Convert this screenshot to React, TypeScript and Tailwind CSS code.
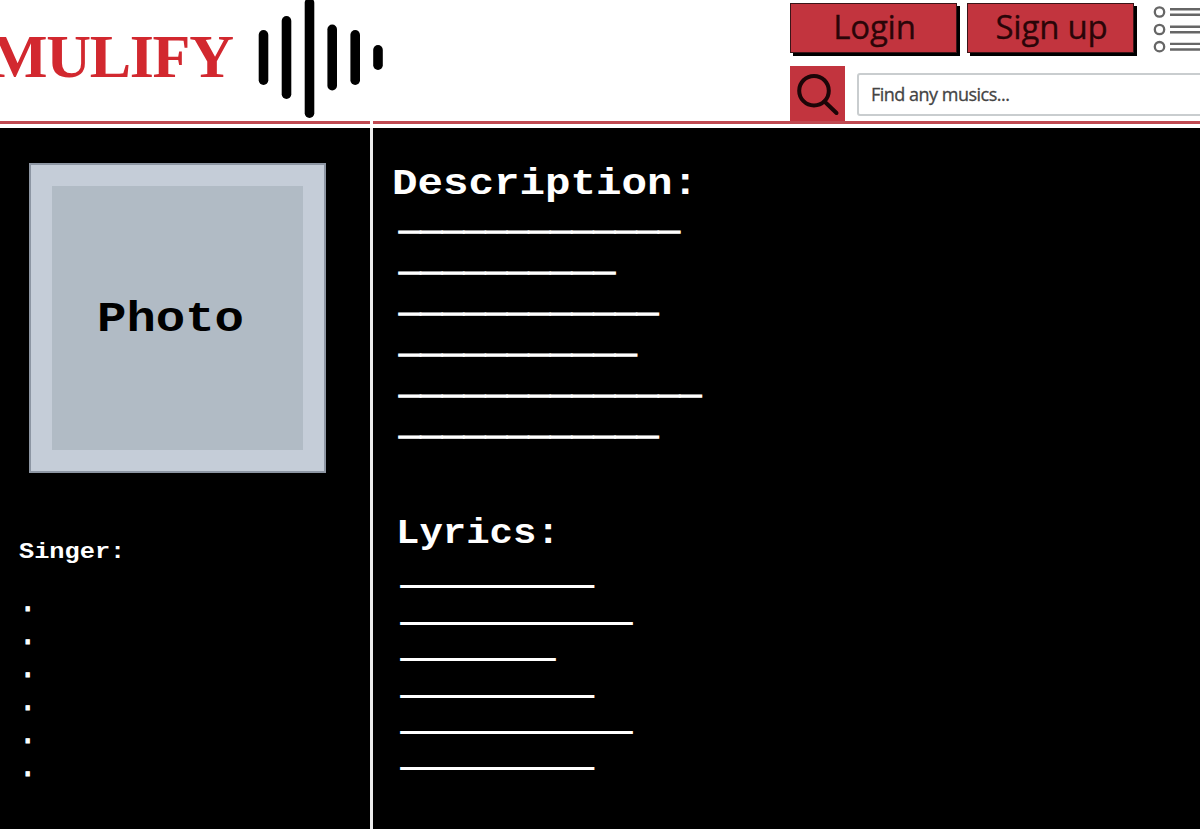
const description = [13, 10, 12, 11, 14, 12];
const lyrics = [10, 12, 8, 10, 12, 10];
const singers = [0, 1, 2, 3, 4, 5];
const waves = [
  { x: 263.5, top: 30, bottom: 85 },
  { x: 286.5, top: 16, bottom: 99 },
  { x: 309.5, top: -2, bottom: 118 },
  { x: 332.2, top: 24.5, bottom: 90.5 },
  { x: 355.2, top: 30, bottom: 85 },
  { x: 378, top: 45, bottom: 70 },
];

function Logo() {
  return (
    <div className="flex h-[121px] w-[400px] items-start overflow-hidden">
      <div className="-ml-[11px] mt-[21px] w-[260px] shrink-0 whitespace-nowrap font-['Liberation_Serif',serif] text-[62px] leading-[70px] font-bold tracking-[-1.3px] text-[#d2282f]">
        MULIFY
      </div>
      <svg className="h-[121px] w-[140px] shrink-0" viewBox="249 0 140 121">
        {waves.map((w) => (
          <rect key={w.x} x={w.x - 4.8} y={w.top} width={9.6} height={w.bottom - w.top} rx={4.8} />
        ))}
      </svg>
    </div>
  );
}

function Button({ label }: { label: string }) {
  return (
    <button className="flex h-[50px] w-[167px] items-center justify-center border border-[#3a1518] bg-[#c2343e] pb-[3px] pl-[2px] font-['Open_Sans',sans-serif] text-[33px] leading-none tracking-[-0.2px] text-[#2a0508] shadow-[3px_3px_0_#000] [-webkit-text-stroke:0.3px_#2a0508]">
      {label}
    </button>
  );
}

function Menu() {
  return (
    <svg className="h-[55px] w-[50px] shrink-0" viewBox="1150 0 50 55" fill="none" stroke="#666">
      {[12, 29.5, 46.7].map((y) => (
        <g key={y}>
          <circle cx={1159.5} cy={y} r={4.7} strokeWidth={2.3} />
          <path d={`M1170 ${y - 2.8}h30M1170 ${y + 2.8}h30`} strokeWidth={2.4} />
        </g>
      ))}
    </svg>
  );
}

function Lines({ counts }: { counts: number[] }) {
  return (
    <>
      {counts.map((n, i) => (
        <p key={i}>{"_".repeat(n)}</p>
      ))}
    </>
  );
}

export default function App() {
  return (
    <div className="flex h-[829px] w-[1200px] flex-col overflow-hidden bg-black font-['Liberation_Mono',monospace] font-bold text-white">
      <header className="flex h-[121px] shrink-0 justify-between bg-white">
        <Logo />
        <div className="flex w-[410px] flex-col font-normal">
          <div className="flex h-[66px] pt-[3px]">
            <Button label="Login" />
            <div className="w-[10px] shrink-0" />
            <Button label="Sign up" />
            <div className="-mt-[3px] ml-4">
              <Menu />
            </div>
          </div>
          <div className="flex h-[55px] shrink-0">
            <div className="h-[55px] w-[55px] shrink-0 bg-[#c2343e]">
              <svg className="h-[55px] w-[55px]" viewBox="790 66 55 55" fill="none" stroke="#1c0507" strokeWidth="4">
                <circle cx="814" cy="90.7" r="14.800" />
                <path d="M824.500 101.500L836.500 113" strokeLinecap="round" />
              </svg>
            </div>
            <div className="mt-[7px] ml-3 flex h-[43px] w-[360px] shrink-0 items-center rounded-[3px] border-2 border-[#c9cdcf] pl-3 font-['Open_Sans',sans-serif] text-[18px] tracking-[-0.5px] whitespace-nowrap text-[#444] [-webkit-text-stroke:0.3px_#444]">
              Find any musics...
            </div>
          </div>
        </div>
      </header>
      <div className="flex h-[7px] shrink-0 flex-col bg-white">
        <div className="flex h-[3px] bg-[#c04a52]">
          <div className="ml-[370px] w-[3px] bg-white" />
        </div>
      </div>
      <main className="flex min-h-0 flex-1">
        <aside className="w-[370px] shrink-0">
          <div className="mt-[35px] ml-[29px] h-[310px] w-[297px] border-2 border-[#8d96a3] bg-[#c5cdd8] px-[21px] py-[21px]">
            <div className="flex h-[264px] w-[251px] items-center bg-[#b1bbc5] pl-[45px] text-black">
              <span className="origin-[0_74%] scale-y-[0.88] text-[49px] leading-none">Photo</span>
            </div>
          </div>
          <h2 className="mt-[64px] ml-[19px] origin-[0_74%] scale-y-[0.88] text-[25.300px] leading-[30px]">Singer:</h2>
          <div className="mt-[20px] ml-[19px] text-[29px] leading-[33px] font-normal [-webkit-text-stroke:1px_#fff]">
            {singers.map((i) => (
              <p key={i}>.</p>
            ))}
          </div>
        </aside>
        <div className="w-[3px] shrink-0 bg-[#eee]" />
        <section className="flex flex-col">
          <h1 className="mt-[31px] ml-[19px] origin-[0_74%] scale-y-[0.88] text-[42.500px] leading-[48px]">Description:</h1>
          <div className="mt-[-7px] ml-[26px] text-[36px] leading-[40.900px] [-webkit-text-stroke:1.5px_#fff]">
            <Lines counts={description} />
          </div>
          <h1 className="mt-[66px] ml-[23px] origin-[0_74%] scale-y-[0.88] text-[39px] leading-[44px]">Lyrics:</h1>
          <div className="mt-[3px] ml-[28px] text-[32.100px] leading-[36.400px] [-webkit-text-stroke:1.5px_#fff]">
            <Lines counts={lyrics} />
          </div>
        </section>
      </main>
    </div>
  );
}
